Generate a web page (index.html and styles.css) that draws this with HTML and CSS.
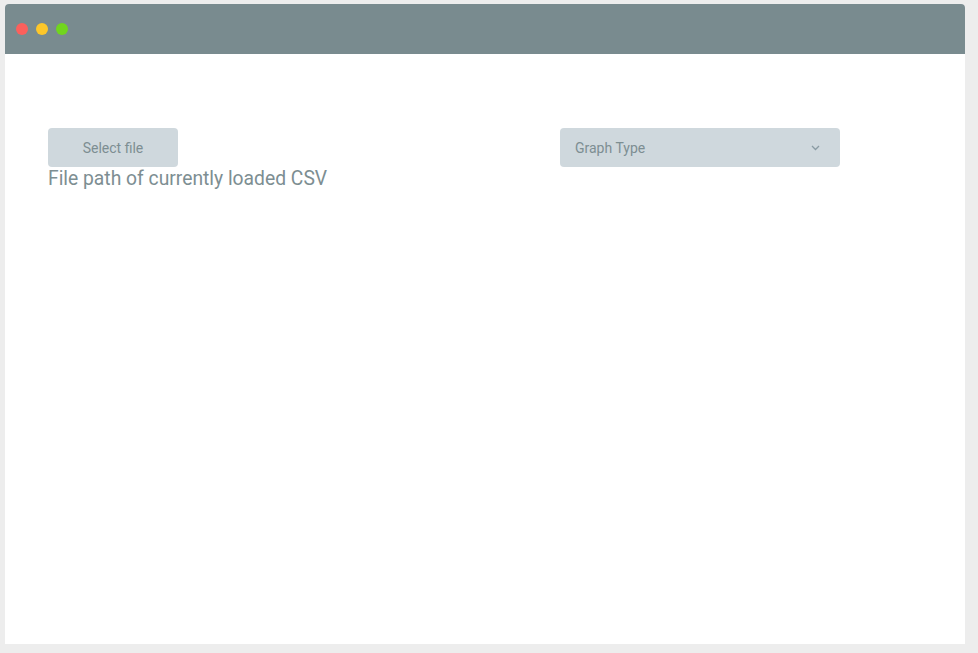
FILE: index.html
```html
<!DOCTYPE html>
<html>
<head>
<meta charset="utf-8">
<link rel="stylesheet" href="styles.css">
</head>
<body>
<div class="window">
  <div class="titlebar">
    <span class="dot red"></span>
    <span class="dot yellow"></span>
    <span class="dot green"></span>
  </div>
  <div class="content">
    <div class="left">
      <button class="btn">Select file</button>
      <div class="path">File path of currently loaded CSV</div>
    </div>
    <div class="select">
      <span>Graph Type</span>
      <svg width="9" height="6" viewBox="0 0 9 6"><path d="M1 1l3.5 3.5 3.5-3.5" fill="none" stroke="#8a9ba3" stroke-width="1.3"/></svg>
    </div>
  </div>
</div>
</body>
</html>
```
FILE: styles.css
```css
html, body { margin: 0; padding: 0; }
body {
  background: #ededed;
  width: 978px;
  height: 653px;
  font-family: Roboto, "Liberation Sans", sans-serif;
  padding: 4px 0 0 5px;
  box-sizing: border-box;
}
.window {
  width: 960px;
  height: 640px;
  background: #fff;
  border-radius: 4px 4px 0 0;
  overflow: hidden;
  display: flex;
  flex-direction: column;
}
.titlebar {
  height: 50px;
  background: #798b8f;
  display: flex;
  align-items: center;
  padding-left: 11px;
  gap: 8px;
  box-sizing: border-box;
}
.dot { width: 12px; height: 12px; border-radius: 50%; display: block; }
.red { background: #fc605c; }
.yellow { background: #fdc72a; }
.green { background: #71d51e; }
.content {
  display: flex;
  padding: 74px 0 0 43px;
}
.left {
  display: flex;
  flex-direction: column;
  align-items: flex-start;
  width: 512px;
}
.btn {
  width: 130px;
  height: 39px;
  border: none;
  border-radius: 4px;
  background: #cfd8dd;
  color: #7d8e92;
  font-family: Roboto, "Liberation Sans", sans-serif;
  font-size: 14px;
  padding: 0;
}
.path {
  color: #7d8e92;
  font-size: 19.3px;
  line-height: 24px;
  margin-top: 0;
}
.select {
  width: 280px;
  height: 39px;
  border-radius: 4px;
  background: #cfd8dd;
  color: #7d8e92;
  font-size: 14px;
  display: flex;
  align-items: center;
  justify-content: space-between;
  padding: 0 20px 0 15px;
  box-sizing: border-box;
}
```
